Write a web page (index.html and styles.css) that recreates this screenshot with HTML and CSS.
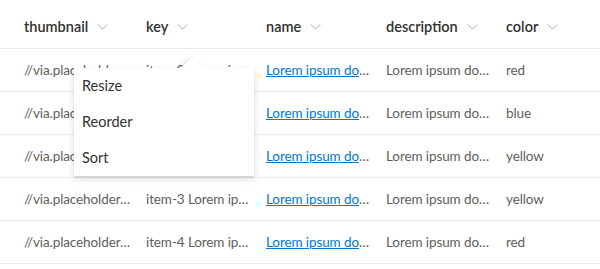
FILE: index.html
```html
<!DOCTYPE html>
<html>
<head>
<meta charset="utf-8">
<link rel="stylesheet" href="styles.css">
</head>
<body>
<div class="list">
  <div class="header">
    <div class="hcell c1"><span>thumbnail</span><svg class="chev" viewBox="0 0 12 7"><path d="M0.5 0.5 L6 6 L11.5 0.5" /></svg></div>
    <div class="hcell"><span>key</span><svg class="chev" viewBox="0 0 12 7"><path d="M0.5 0.5 L6 6 L11.5 0.5" /></svg></div>
    <div class="hcell"><span>name</span><svg class="chev" viewBox="0 0 12 7"><path d="M0.5 0.5 L6 6 L11.5 0.5" /></svg></div>
    <div class="hcell"><span>description</span><svg class="chev" viewBox="0 0 12 7"><path d="M0.5 0.5 L6 6 L11.5 0.5" /></svg></div>
    <div class="hcell"><span>color</span><svg class="chev" viewBox="0 0 12 7"><path d="M0.5 0.5 L6 6 L11.5 0.5" /></svg></div>
  </div>
  <div class="row">
    <div class="cell c1">//via.placeholder.com/100x100</div>
    <div class="cell">item-0 Lorem ipsum dolor</div>
    <div class="cell"><a class="link" href="#">Lorem ipsum dolor sit amet</a></div>
    <div class="cell">Lorem ipsum dolor sit amet</div>
    <div class="cell">red</div>
  </div>
  <div class="row">
    <div class="cell c1">//via.placeholder.com/100x100</div>
    <div class="cell">item-1 Lorem ipsum dolor</div>
    <div class="cell"><a class="link" href="#">Lorem ipsum dolor sit amet</a></div>
    <div class="cell">Lorem ipsum dolor sit amet</div>
    <div class="cell">blue</div>
  </div>
  <div class="row">
    <div class="cell c1">//via.placeholder.com/100x100</div>
    <div class="cell">item-2 Lorem ipsum dolor</div>
    <div class="cell"><a class="link" href="#">Lorem ipsum dolor sit amet</a></div>
    <div class="cell">Lorem ipsum dolor sit amet</div>
    <div class="cell">yellow</div>
  </div>
  <div class="row">
    <div class="cell c1">//via.placeholder.com/100x100</div>
    <div class="cell">item-3 Lorem ipsum dolor</div>
    <div class="cell"><a class="link" href="#">Lorem ipsum dolor sit amet</a></div>
    <div class="cell">Lorem ipsum dolor sit amet</div>
    <div class="cell">yellow</div>
  </div>
  <div class="row">
    <div class="cell c1">//via.placeholder.com/100x100</div>
    <div class="cell">item-4 Lorem ipsum dolor</div>
    <div class="cell"><a class="link" href="#">Lorem ipsum dolor sit amet</a></div>
    <div class="cell">Lorem ipsum dolor sit amet</div>
    <div class="cell">red</div>
  </div>

  <div class="menu">
    <div class="beak"></div>
    <div class="menu-list">
      <div class="item">Resize</div>
      <div class="item">Reorder</div>
      <div class="item">Sort</div>
    </div>
  </div>
</div>
</body>
</html>
```
FILE: styles.css
```css
html, body {
  margin: 0;
  padding: 0;
  background: #ffffff;
  overflow: hidden;
}
body {
  font-family: "Segoe UI", Lato, "Open Sans", sans-serif;
}
.list {
  position: relative;
  width: 600px;
}
.header {
  display: flex;
  height: 49px;
  box-sizing: border-box;
  padding: 5px 0 0 12px;
  border-bottom: 1px solid #edebe9;
  align-items: center;
}
.hcell {
  width: 120px;
  box-sizing: border-box;
  padding-left: 12px;
  display: flex;
  align-items: center;
  flex-shrink: 0;
  font-size: 14.5px;
  font-weight: 600;
  color: #323130;
}
.hcell.c1, .cell.c1 {
  width: 122px;
}
.chev {
  width: 11px;
  height: 6px;
  margin-left: 9px;
  margin-top: 1px;
  fill: none;
  stroke: #a19f9d;
  stroke-width: 1;
}
.row {
  display: flex;
  height: 43px;
  box-sizing: border-box;
  padding-left: 12px;
  border-bottom: 1px solid #edebe9;
  align-items: center;
}
.cell {
  width: 120px;
  box-sizing: border-box;
  padding: 0 3px 0 12px;
  flex-shrink: 0;
  font-size: 13.5px;
  letter-spacing: -0.1px;
  color: #605e5c;
  white-space: nowrap;
  overflow: hidden;
  text-overflow: ellipsis;
}
.link {
  color: #0078d4;
  text-decoration: underline;
}
.menu {
  position: absolute;
  left: 74px;
  top: 68px;
  width: 180px;
  background: #ffffff;
  box-shadow: 0 3.2px 7.2px rgba(0,0,0,0.132), 0 0.6px 1.8px rgba(0,0,0,0.108);
}
.beak {
  position: absolute;
  width: 16px;
  height: 16px;
  left: 110px;
  top: -8px;
  background: #ffffff;
  transform: rotate(45deg);
  box-shadow: 0 3.2px 7.2px rgba(0,0,0,0.132), 0 0.6px 1.8px rgba(0,0,0,0.108);
}
.menu-list {
  position: relative;
  background: #ffffff;
}
.item {
  height: 36px;
  line-height: 36px;
  padding-left: 8px;
  font-size: 14.5px;
  color: #323130;
}
```
